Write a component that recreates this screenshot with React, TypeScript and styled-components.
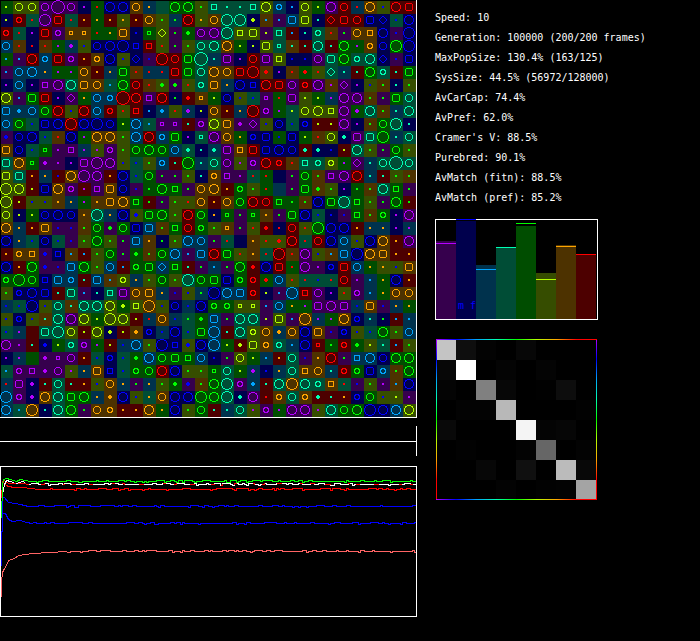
import React from "react";
import styled, { createGlobalStyle } from "styled-components";

const GlobalStyle = createGlobalStyle`
  body { margin: 0; background: #000; color: #fff; font: 10px/20px "DejaVu Sans Mono", "Liberation Mono", monospace; }
`;

const bright: Record<string, string> = {
  P: "#b400ff", B: "#0000ff", S: "#00a5ff", T: "#00ffb4",
  G: "#00ff00", L: "#b4ff00", O: "#ffa500", R: "#ff0000",
};
const dark: Record<string, string> = {
  P: "#36004d", B: "#00004d", S: "#00324d", T: "#004d36",
  G: "#004d00", L: "#364d00", O: "#4d3200", R: "#4d0000",
};

/* Each cell is two characters. Upper + digit: ring of that size in the cell's own hue.
   Upper + lower: a dot of the second hue. Lower + lower: a larger spot of the second hue. */
const population = `
Gl L4 L4 P4 P9 P4 Bp Gr B7 B7 O4 So T0 G7 G7 Lg T2 Tt Tt T2 L7 S3 Bs L4 Gl P7 R4 Sr O7 Lb R7 R6
Bl R3 Tr P8 R6 Tr Ro Go Ro Lo Ro O4 Lg Sg R7 Lo O4 T8 T8 bl Os Ps S6 L6 Bt R5 R6 R4 B6 B5 Tb B7
R3 Tr Bp R6 P3 O1 O1 Gr Go O6 Bb G1 L5 Pg gg P4 P7 T8 L2 L6 Pl T2 Rs Bt T3 Or Pg O4 O2 B7 Pb B8
S4 Or Br Or Gp sp Lb B4 B7 B8 B2 R2 Lr Pg Lg T4 T7 O7 Gl Bl L6 T1 Ot Rt T7 Rt G7 Gp O3 B4 G8 B8
Gs Ps R7 S3 R6 P3 Ro O3 B7 Lb B5 Pb R8 R4 G6 T9 St P6 Bp R4 P6 L2 Bb Bb P4 T6 G7 T3 T7 B5 Pb B6
Ps S4 S7 So Gp Gp O4 Ro So G6 Or Sr Sr R6 G6 T4 O7 O4 R6 R8 or Bp Or gr Lr T5 St Rt G7 T3 Rt G6
Bp S4 Bp P2 P7 T7 O6 O4 Ts G7 R4 Or lg pg Lr T3 O6 So B7 B2 R7 R6 P4 R3 P7 Op P5 Bp Lb Og Bt Lg
L7 Ps G6 R6 Bp P5 Go S4 S3 R9 R7 P2 R7 Bg rr O1 Gl B4 Lb Tb P1 Gr P6 Ll Gl Sp P7 P7 Og Pg G6 T4
S6 ss S4 G4 R7 Lb R7 S4 R3 Lr R2 Bs ss Lr sp Bl O4 Ro So R8 P3 Gp Tl L4 L7 L2 P7 gp T7 Og St T7
S4 G4 Tb B6 B7 R8 B7 B8 B4 Gl S7 Ts P1 P1 Rt P3 L7 O6 pp P5 Lb B4 Tb B3 Rl Rl P7 Bp Og G4 T8 Bt
pb B4 B7 Tb Or B7 Gp O7 O7 Lg S7 R7 S3 G6 Bp T1 P7 O4 Go B3 B6 Gb B6 Gl Or L4 bt P6 T6 G8 St T4
O6 B4 Tb G1 Pp P2 Sp Lp P3 Lg G4 G7 G4 S4 tt Bt st P6 O2 R6 B6 B7 B4 rt bt Bb Rl T7 Lg Pg G4 Lg
T6 O7 G1 pp Pp Bp P6 P8 P7 Lb Tb Lg S3 Rt G8 St T4 P4 Lp P3 R7 R3 Or T2 T3 L3 Gp P5 St T4 T9 T4
L6 T6 Ro So Rb O7 P8 P7 Ro B7 Tb G4 Pg Pg Lg Bt O3 P2 Pp Tr Gr B0 Pg G4 Og P2 P7 R7 St Rt Lg Og
L8 L7 Rl B6 O7 P3 Rp P2 O6 B4 Pb Gg G7 G2 Pg O4 O7 Ro G3 Lg Gr S0 Pg G6 og Lg Bp Gg Og T7 G2 Pg
L8 Rl Lb Lb Oo So Gp Oo O6 O7 G2 Rg Pg Lg Lr O4 Ro O4 G4 R7 R4 G2 Gg Og B7 G6 T8 G2 Lg Pg G7 Rg
L4 Bl Gl B4 B7 B4 Oo T8 So B7 lb G6 G7 Lg R7 G4 Bo G1 Pg G1 Oo Pg G6 B7 Tb Bb Pb G2 Og G3 Bp P7
O7 So Ro O6 Pb Pb Og G4 pg G4 B6 S6 Og G2 R4 G3 Lg O1 Pg Lr rr Br R4 Lr G8 B7 B7 Ro So So Bp Sp
B7 So Tb B4 Tb Pb Lg G7 Lg Pg S6 Oo Bg Lg S7 S4 Pg Tr B0 Oo Lr lr R7 Tr R4 B7 S4 Lb B7 O7 Ro P7
Ro O3 O2 pb B2 Os Rs Lg G4 Pg gg Og G4 S7 Ps S6 R7 G6 Lr Oo Tr R8 Or P7 Lb Os S6 B8 O7 O6 Ro Ro
B7 Ro G7 pb Pb S6 G7 Lg S4 Rs G3 G6 S5 G2 Rt Pg Ss Pg G7 rr B7 R6 Gr P7 Pp B3 R6 S4 Go Lo Lb O6
G3 G8 G4 B2 S6 S3 Rt S6 Os L3 So Lg G4 Lg T8 G4 G6 B6 G3 R3 gr S4 Lr Tr Tb Tr R4 Pp Ss Go B7 Ro
Lg B3 B7 B6 Rt T6 Ps Bt T2 P6 O4 O6 So Pb Lb Sg B8 S7 S6 R3 Bl Ps S8 R2 P4 Bp Lr P3 Ss Go O4 O4
Sb Tb B8 Lb T4 Ot T7 T7 L7 gl L2 O8 Lb B4 Sb B7 G3 G3 L1 L1 Ps S4 Go Gp P6 P7 P6 Sb O6 Pb So Go
Lb B3 Lb Ot T7 P7 L7 Gl L8 L7 Rl Sr O4 Sb Tg gg S6 Pg T7 T7 Pl L6 Ps O8 Sp Gp O7 B3 St Bg Rs Ss
Tb Sp R0 T6 T8 L4 Rl L7 bl Rl oo B3 Sb B7 Tb G6 S8 Rt T7 L3 O4 so O4 B7 O6 Pb B3 Lb Tb G7 Lg S4
P7 Pp Rt bb Gl T3 P3 Gp Rl Sb S7 Lg B8 B2 lb B7 S8 Gl rl L6 O3 T3 Ss B7 R1 Gg R3 gg Ll Tt Rs Lg
Bp Sp G0 pp P1 P4 Ro Tb B3 Tb gg S7 G4 G6 G2 S4 Bb Pg L4 Gl Ss Ro T4 Pb Oo R7 Pg S2 S7 B4 G7 G7
Ts P3 P2 pp P4 Lp So O6 B2 Tb G3 G4 R7 B7 Lg Lg G1 T4 Gl sp Bb So T4 O2 O4 St R3 G3 B6 S3 Og G7
Sr P6 bp Rt T4 Rt Ro Lb O4 So Pg So Lg gg pb Og G7 T8 P3 ss Rt T7 O8 T7 T3 O2 Tr Pb Lg Pp Os B7
S8 P3 bp O7 T7 G6 G7 So oo B7 Lb To O4 B7 B7 G8 G7 T8 bt P7 Rr O3 T4 O3 rt Rt Ro B3 G4 Lb Ll Pp
S7 Ts O8 Bt T7 G7 Pg O4 O3 Ro Ro O7 Go B7 Lg G4 Rt St T4 Lp P3 Gp P7 P7 Lp T7 G4 G7 B8 B7 S7 L7
`.trim().split("\n").map((row) => row.trim().split(/\s+/));

const CELL = 13;

/* One quadrant of every ring, as "xy" offsets from the cell's centre. */
const quadrants: Record<string, string> = {
  "1": "10 11 01",
  "2": "20 21 22 12 02",
  "3": "20 21 11 12 02",
  "4": "30 31 22 13 03",
  "5": "30 21 12 03",
  "6": "30 31 32 23 13 03",
  "7": "40 41 32 33 23 14 04",
  "8": "50 51 42 43 34 24 15 05",
  "9": "60 61 52 53 44 35 25 16 06",
};
const rings: Record<string, string> = Object.fromEntries(
  Object.entries(quadrants).map(([size, pixels]) => [
    size,
    pixels.split(" ").flatMap(([dx, dy]) => {
      const right = 6 + Number(dx), left = 5 - Number(dx);
      const below = 6 + Number(dy), above = 5 - Number(dy);
      return [[right, below], [left, below], [right, above], [left, above]];
    }).map(([x, y]) => `M${x} ${y}h1v1h-1z`).join(""),
  ]),
);

const Page = styled.main`
  display: grid;
  grid-template-columns: auto 1fr;
  column-gap: 18px;
  min-height: 100vh;
`;
const Plots = styled.section`
  display: flex;
  flex-direction: column;
`;
const Drawing = styled.svg`
  display: block;
  shape-rendering: crispEdges;
`;
const Timeline = styled.div`
  height: 30px;
  margin: 8px 0 10px;
  border-right: 1px solid #fff;
  display: flex;
  align-items: center;
`;
const Track = styled.div`
  flex: 1;
  height: 1px;
  background: #fff;
`;
const Sidebar = styled.section`
  display: flex;
  flex-direction: column;
  align-items: flex-start;
  padding-top: 8px;
`;
const Stats = styled.ul`
  list-style: none;
  margin: 0 0 11px;
  padding: 0;
  white-space: nowrap;
`;
const Histogram = styled.div`
  display: flex;
  height: 99px;
  padding-right: 1px;
  border: 1px solid #fff;
  margin-bottom: 19px;
`;
const Column = styled.div`
  position: relative;
  width: 20px;
  display: flex;
  align-items: flex-end;
`;
const Bar = styled.div<{ $hue: string }>`
  flex: 1;
  background: ${(p) => dark[p.$hue]};
`;
const Level = styled.div<{ $hue: string }>`
  position: absolute;
  left: 0;
  right: 0;
  height: 1px;
  background: ${(p) => bright[p.$hue]};
`;
const Sexes = styled.span`
  position: absolute;
  left: 2px;
  bottom: 3px;
  color: #00f;
  white-space: pre;
`;
const spectrum = Object.values(bright).map((c, i) => `${c} ${i * 12.5}%`).join(", ");
const Matrix = styled.div`
  margin-left: 1px;
  padding: 1px;
  background:
    linear-gradient(to right, ${spectrum}) top / 100% 1px no-repeat,
    linear-gradient(to right, ${spectrum}) bottom / 100% 1px no-repeat,
    linear-gradient(${spectrum}) left / 1px 100% no-repeat,
    linear-gradient(${spectrum}) right / 1px 100% no-repeat;
`;
const MatrixCells = styled.div`
  display: grid;
  grid-template-columns: 19px repeat(7, 20px);
  grid-template-rows: repeat(7, 20px) 19px;
`;
const Shade = styled.div<{ $value: number }>`
  background: rgb(${(p) => p.$value}, ${(p) => p.$value}, ${(p) => p.$value});
`;

function Cell({ code, x, y }: { code: string; x: number; y: number }) {
  const [a, b] = code;
  const hue = a.toUpperCase();
  const color = bright[b.toUpperCase()];
  return (
    <g transform={`translate(${x} ${y})`}>
      {rings[b] && <path d={rings[b]} fill={bright[hue]} />}
      {color && <rect x="5" y="5" width="2" height="2" fill={color} />}
      {color && a !== hue && <path d="M5 4H7V5H8V7H7V8H5V7H4V5H5Z" fill={color} />}
    </g>
  );
}

function Field() {
  return (
    <Drawing width="417" height="418" role="img" aria-label="Population">
      {population.map((row, j) => row.map((code, i) => (
        <rect key={`${i}-${j}`} x={i * CELL} y={1 + j * CELL} width={CELL} height={CELL} fill={dark[code[0].toUpperCase()]} />
      )))}
      <path d="M.5 0V417" stroke="#000" />
      {population.map((row, j) => row.map((code, i) => (
        <Cell key={`${i}-${j}`} code={code} x={i * CELL} y={1 + j * CELL} />
      )))}
      <path d="M416.5 0V417.5H0" fill="none" stroke="#fff" />
    </Drawing>
  );
}

type Point = [number, number];
type Series = { color: string; seed: number; start: Point[] };
const series: Series[] = [
  { color: "#ff6464", seed: 3, start: [[1, 130], [1, 115], [2, 106], [4, 102], [6, 99], [8, 94], [14, 92], [18, 89], [26, 88], [32, 87], [50, 86], [66, 85]] },
  { color: "#0000ff", seed: 11, start: [[1, 99], [1, 66], [2, 65], [2, 47], [5, 47], [8, 53], [12, 55], [20, 54], [26, 56], [32, 57]] },
  { color: "#0000ff", seed: 7, start: [[1, 99], [2, 31], [4, 31], [8, 36], [14, 37], [20, 38], [28, 40], [32, 40]] },
  { color: "#ff0000", seed: 5, start: [[1, 32], [2, 15], [6, 19], [8, 20], [14, 21], [22, 21], [30, 22], [38, 23]] },
  { color: "#ff0000", seed: 9, start: [[1, 32], [2, 16], [4, 14], [8, 17], [20, 17], [30, 18]] },
  { color: "#ffffff", seed: 9, start: [[2, 28], [4, 18], [6, 14], [10, 15], [16, 17], [22, 15], [30, 18]] },
  { color: "#00ff00", seed: 2, start: [[1, 52], [2, 18], [3, 13], [6, 12], [10, 13], [16, 15], [20, 13], [30, 15]] },
];

function trace({ seed, start }: Series) {
  const [x0, base] = start[start.length - 1];
  let d = "M" + start.map(([x, y]) => `${x + 0.5} ${y + 0.5}`).join("L");
  let state = seed * 7919;
  for (let x = x0 + 2; x < 416;) {
    state = (state * 1103515245 + 12345) % 2147483648;
    const roll = (state >> 12) % 10;
    const run = roll < 4 ? 2 : 4;
    const y = base + 0.5 + (roll === 0 ? 1 : roll % 3 === 0 ? -1 : 0);
    const end = Math.min(416, x + run);
    d += `L${x} ${y}H${end}`;
    x = end;
  }
  return d;
}

function History() {
  return (
    <Drawing width="417" height="151" role="img" aria-label="History">
      {series.map((s, i) => (
        <path key={i} d={trace(s)} fill="none" stroke={s.color} strokeDasharray={i === 5 ? "22 3 9 4 14 5" : undefined} />
      ))}
      <rect x=".5" y=".5" width="416" height="150" fill="none" stroke="#fff" />
    </Drawing>
  );
}

const stats = [
  "Speed: 10",
  "Generation: 100000 (200/200 frames)",
  "MaxPopSize: 130.4% (163/125)",
  "SysSize: 44.5% (56972/128000)",
  "AvCarCap: 74.4%",
  "AvPref: 62.0%",
  "Cramer's V: 88.5%",
  "Purebred: 90.1%",
  "AvMatch (fitn): 88.5%",
  "AvMatch (pref): 85.2%",
];

const bars = [
  { hue: "P", height: 78, level: 75 },
  { hue: "B", height: 98, level: 99 },
  { hue: "S", height: 54, level: 49 },
  { hue: "T", height: 71, level: 71 },
  { hue: "G", height: 93, level: 95 },
  { hue: "L", height: 46, level: 39 },
  { hue: "O", height: 74, level: 72 },
  { hue: "R", height: 64, level: 64 },
];

const matrix = [
  [196, 14, 3, 0, 7, 0, 0, 0],
  [7, 255, 0, 4, 0, 4, 0, 0],
  [4, 0, 128, 7, 0, 1, 13, 0],
  [0, 3, 3, 184, 0, 0, 0, 2],
  [9, 0, 0, 0, 244, 4, 6, 0],
  [0, 2, 0, 0, 3, 102, 0, 3],
  [0, 0, 7, 0, 16, 0, 187, 8],
  [0, 0, 0, 3, 0, 2, 3, 164],
];

export default function App() {
  return (
    <>
      <GlobalStyle />
      <Page>
        <Plots>
          <Field />
          <Timeline><Track /></Timeline>
          <History />
        </Plots>
        <Sidebar>
          <Stats>{stats.map((line) => <li key={line}>{line}</li>)}</Stats>
          <Histogram>
            {bars.map((b) => (
              <Column key={b.hue}>
                <Bar $hue={b.hue} style={{ height: b.height }} />
                <Level $hue={b.hue} style={{ bottom: b.level }} />
                {b.hue === "B" && <Sexes>m f</Sexes>}
              </Column>
            ))}
          </Histogram>
          <Matrix>
            <MatrixCells>
              {matrix.flat().map((v, i) => <Shade key={i} $value={v} />)}
            </MatrixCells>
          </Matrix>
        </Sidebar>
      </Page>
    </>
  );
}
